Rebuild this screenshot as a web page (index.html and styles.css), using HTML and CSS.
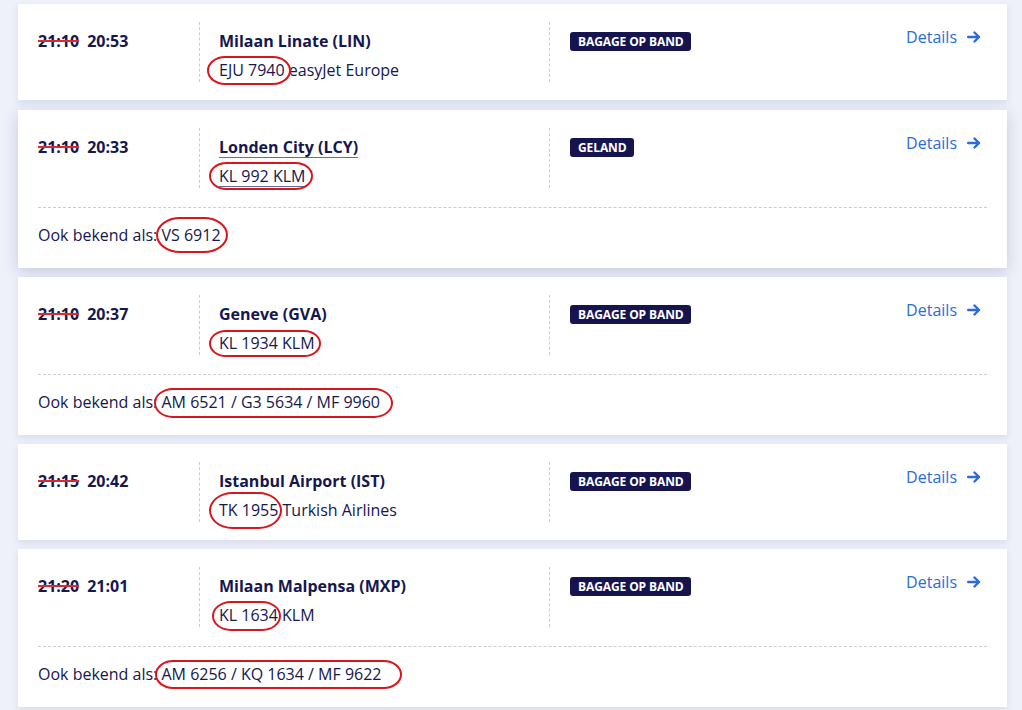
FILE: index.html
```html
<!DOCTYPE html>
<html lang="nl">
<head>
<meta charset="utf-8">
<title>Aankomsten</title>
<link rel="stylesheet" href="styles.css">
</head>
<body>
<div class="list">

  <div class="card">
    <div class="row">
      <div class="time"><span class="old">21:10</span><span class="new">20:53</span></div>
      <div class="dest">
        <div class="city">Milaan Linate (LIN)</div>
        <div class="flight"><span class="mark m1">EJU 7940</span> easyJet Europe</div>
      </div>
      <div class="status"><span class="badge">BAGAGE OP BAND</span></div>
      <a class="details" href="#">Details <svg width="14" height="12" viewBox="0 0 14 12"><path d="M1.2 6H12M7.5 1.5L12 6L7.5 10.5" fill="none" stroke="currentColor" stroke-width="2.4" stroke-linecap="round" stroke-linejoin="round"/></svg></a>
    </div>
  </div>

  <div class="card hover">
    <div class="row">
      <div class="time"><span class="old">21:10</span><span class="new">20:33</span></div>
      <div class="dest">
        <div class="city"><span class="ul">Londen City (LCY)</span></div>
        <div class="flight"><span class="mark m2"><span class="ul">KL 992 KLM</span></span></div>
      </div>
      <div class="status"><span class="badge">GELAND</span></div>
      <a class="details" href="#">Details <svg width="14" height="12" viewBox="0 0 14 12"><path d="M1.2 6H12M7.5 1.5L12 6L7.5 10.5" fill="none" stroke="currentColor" stroke-width="2.4" stroke-linecap="round" stroke-linejoin="round"/></svg></a>
    </div>
    <div class="aka">Ook bekend als: <span class="mark m3">VS 6912</span></div>
  </div>

  <div class="card">
    <div class="row">
      <div class="time"><span class="old">21:10</span><span class="new">20:37</span></div>
      <div class="dest">
        <div class="city">Geneve (GVA)</div>
        <div class="flight"><span class="mark m4">KL 1934 KLM</span></div>
      </div>
      <div class="status"><span class="badge">BAGAGE OP BAND</span></div>
      <a class="details" href="#">Details <svg width="14" height="12" viewBox="0 0 14 12"><path d="M1.2 6H12M7.5 1.5L12 6L7.5 10.5" fill="none" stroke="currentColor" stroke-width="2.4" stroke-linecap="round" stroke-linejoin="round"/></svg></a>
    </div>
    <div class="aka">Ook bekend als: <span class="mark m5">AM 6521 / G3 5634 / MF 9960</span></div>
  </div>

  <div class="card">
    <div class="row">
      <div class="time"><span class="old">21:15</span><span class="new">20:42</span></div>
      <div class="dest">
        <div class="city">Istanbul Airport (IST)</div>
        <div class="flight"><span class="mark m6">TK 1955</span> Turkish Airlines</div>
      </div>
      <div class="status"><span class="badge">BAGAGE OP BAND</span></div>
      <a class="details" href="#">Details <svg width="14" height="12" viewBox="0 0 14 12"><path d="M1.2 6H12M7.5 1.5L12 6L7.5 10.5" fill="none" stroke="currentColor" stroke-width="2.4" stroke-linecap="round" stroke-linejoin="round"/></svg></a>
    </div>
  </div>

  <div class="card">
    <div class="row">
      <div class="time"><span class="old">21:20</span><span class="new">21:01</span></div>
      <div class="dest">
        <div class="city">Milaan Malpensa (MXP)</div>
        <div class="flight"><span class="mark m7">KL 1634</span> KLM</div>
      </div>
      <div class="status"><span class="badge">BAGAGE OP BAND</span></div>
      <a class="details" href="#">Details <svg width="14" height="12" viewBox="0 0 14 12"><path d="M1.2 6H12M7.5 1.5L12 6L7.5 10.5" fill="none" stroke="currentColor" stroke-width="2.4" stroke-linecap="round" stroke-linejoin="round"/></svg></a>
    </div>
    <div class="aka">Ook bekend als: <span class="mark m8">AM 6256 / KQ 1634 / MF 9622</span></div>
  </div>

</div>
</body>
</html>
```

FILE: styles.css
```css
* { box-sizing: border-box; }

html, body {
  margin: 0;
  padding: 0;
  background: #eef1fa;
}

body {
  font-family: "Open Sans", "Noto Sans", sans-serif;
  color: #15174f;
  font-size: 16px;
  line-height: 24px;
  overflow: hidden;
  height: 710px;
}

.list {
  display: flex;
  flex-direction: column;
  gap: 9px;
  padding: 4px 15px 0 18px;
}

.card {
  background: #fff;
  padding: 18px 20px 18px 20px;
  box-shadow: 0 3px 7px rgba(40, 50, 110, 0.11);
}

.card.hover {
  margin-top: 1px;
  box-shadow: 0 4px 14px rgba(40, 50, 110, 0.20);
}

.row {
  display: flex;
  align-items: stretch;
  height: 60px;
}

.time {
  width: 162px;
  border-right: 1px dashed #c9ccd6;
  padding-top: 7px;
  font-weight: 700;
  display: flex;
  gap: 8px;
}

.old {
  text-decoration: line-through;
  text-decoration-color: #d92a33;
  text-decoration-thickness: 2px;
}

.dest {
  width: 350px;
  padding-left: 19px;
  padding-top: 7px;
  border-right: 1px dashed #c9ccd6;
}

.city {
  font-weight: 700;
}

.flight {
  margin-top: 5px;
}

.ul {
  text-decoration: underline;
  text-decoration-color: #6a6c90;
  text-underline-offset: 4px;
  text-decoration-thickness: 1px;
}

.status {
  flex: 1;
  padding-left: 20px;
  padding-top: 10px;
  display: flex;
  align-items: flex-start;
}

.badge {
  display: block;
  background: #16144f;
  color: #fff;
  font-size: 12px;
  font-weight: 700;
  line-height: 19px;
  height: 19px;
  padding: 0 7px 0 8px;
  border-radius: 3px;
  letter-spacing: -0.1px;
}

.details {
  color: #2c6bdc;
  text-decoration: none;
  margin-top: 3px;
  align-self: flex-start;
  display: flex;
  align-items: center;
  gap: 10px;
  margin-right: 6px;
}

.aka {
  border-top: 1px dashed #c9ccd6;
  margin-top: 19px;
  padding-top: 15px;
  padding-bottom: 3px;
}

.mark {
  position: relative;
}

.mark::after {
  content: "";
  position: absolute;
  border: 2px solid #d8161d;
  border-radius: 20px / 16px;
  pointer-events: none;
}

.m1::after { left: -12px; right: -6px; top: -3px; bottom: -4px; }
.m2::after { left: -10px; right: -8px; top: -3px; bottom: -3px; }
.m3::after { left: -5px; right: -7px; top: -7px; bottom: -7px; border-radius: 24px / 18px; }
.m4::after { left: -10px; right: -6px; top: -2px; bottom: -3px; }
.m5::after { left: -7px; right: -13px; top: -3px; bottom: -5px; }
.m6::after { left: -10px; right: -4px; top: -7px; bottom: -8px; border-radius: 24px / 19px; }
.m7::after { left: -7px; right: -3px; top: -3px; bottom: -5px; }
.m8::after { left: -6px; right: -21px; top: -3px; bottom: -4px; }
```
